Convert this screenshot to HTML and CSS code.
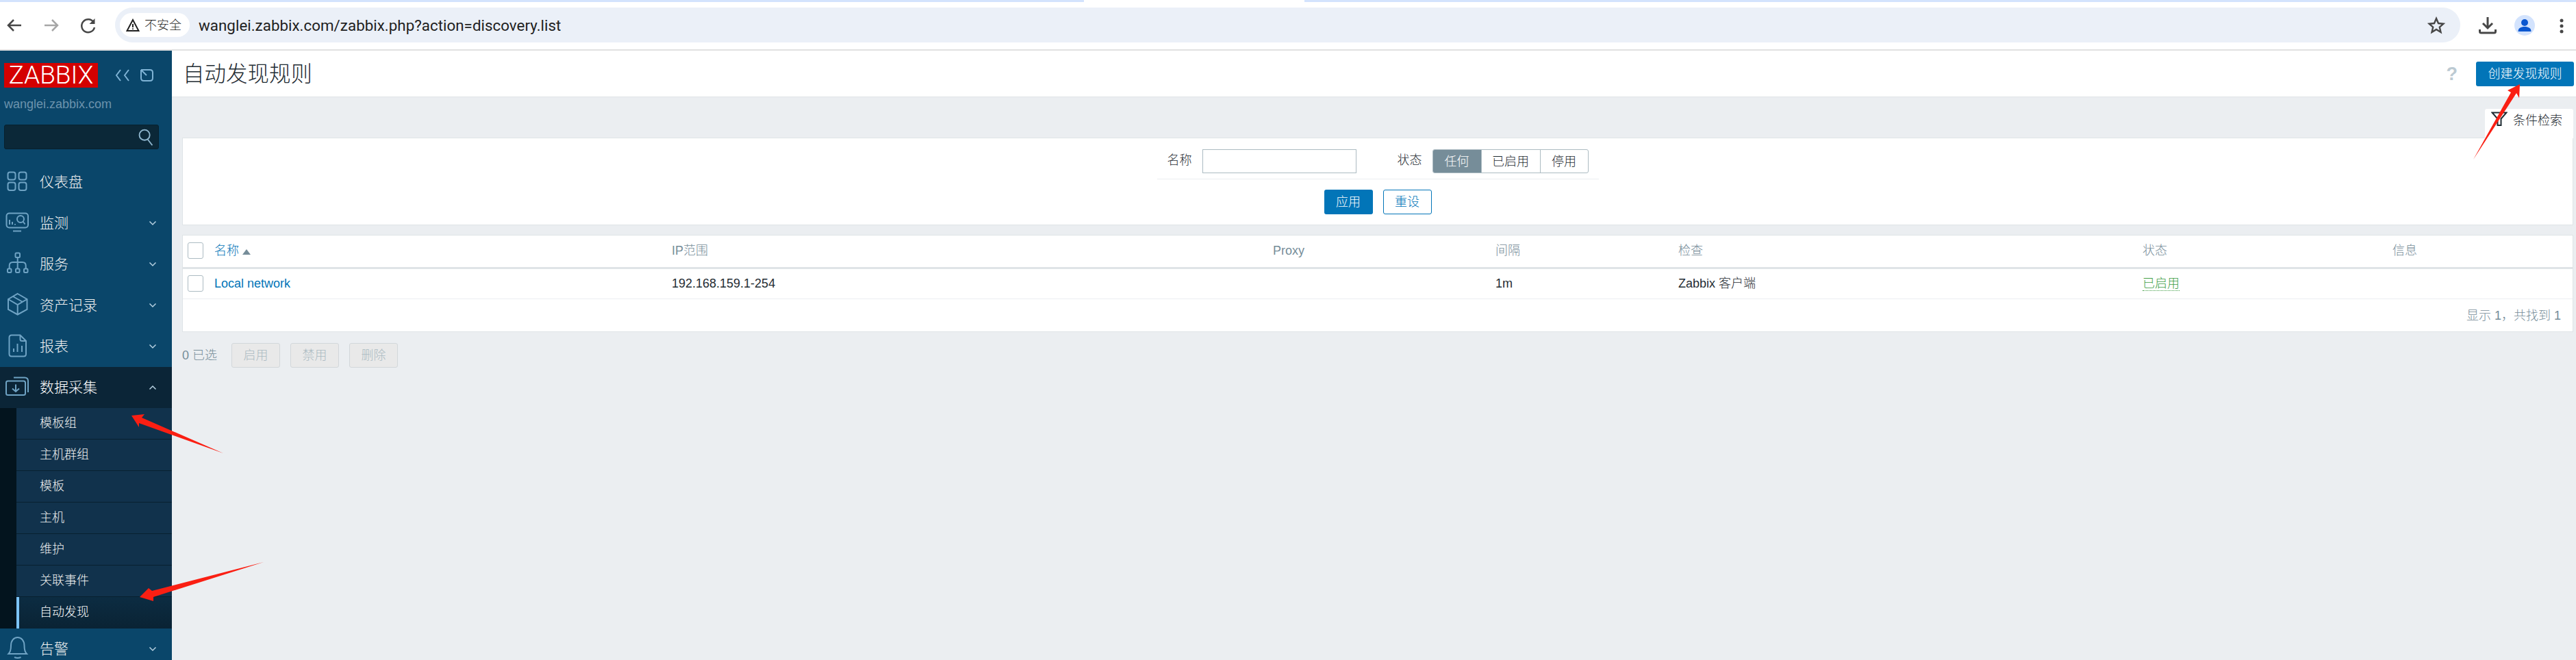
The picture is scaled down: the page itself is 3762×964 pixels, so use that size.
FILE: index.html
```html
<!DOCTYPE html>
<html lang="zh-CN">
<head>
<meta charset="utf-8">
<title>自动发现规则</title>
<link rel="stylesheet" href="styles.css">
</head>
<body>
<div class="tabstrip"><div class="tabstrip-left"></div><div class="tabstrip-tab"></div><div class="tabstrip-right"></div></div>
<header class="toolbar">
  <div class="nav-slot"><svg class="tb-icon" viewBox="0 0 30 30"><path d="M25 15H7M14 7l-8 8 8 8"/></svg></div>
  <div class="nav-slot"><svg class="tb-icon tb-muted" viewBox="0 0 30 30"><path d="M5 15h18M16 7l8 8-8 8"/></svg></div>
  <div class="nav-slot"><svg class="tb-icon" viewBox="0 0 30 30"><path d="M23 11a9.5 9.5 0 1 0 1 7"/><path class="tb-fill" d="M24.5 5v8h-8z"/></svg></div>
  <div class="urlbar">
    <div class="chip">
      <svg class="chip-icon" viewBox="0 0 20 20"><path d="M10 2 1.5 18h17zM10 8v5M10 14.5v1.5"/></svg>
      <span>不安全</span>
    </div>
    <span class="url">wanglei.zabbix.com/zabbix.php?action=discovery.list</span>
    <svg class="star" viewBox="0 0 26 26"><path d="M13 3l3 7 7.5 .7-5.700 5 1.700 7.300L13 19l-6.500 4 1.700-7.300-5.700-5L10 10z"/></svg>
  </div>
  <div class="tb-right">
    <svg class="tb-action tb-download" viewBox="0 0 30 30"><path d="M15 3v16M8 12l7 7 7-7M3.500 21v3a2 2 0 0 0 2 2h19a2 2 0 0 0 2-2v-3"/></svg>
    <svg class="tb-action" viewBox="0 0 30 30"><circle class="av-bg" cx="15" cy="15" r="15"/><circle class="av-fg" cx="15" cy="11" r="5"/><path class="av-fg" d="M5.500 24c0-5 4-7 9.500-7s9.500 2 9.500 7z"/></svg>
    <svg class="tb-action" viewBox="0 0 30 30"><circle class="dot" cx="15" cy="8" r="2.500"/><circle class="dot" cx="15" cy="16" r="2.500"/><circle class="dot" cx="15" cy="24" r="2.500"/></svg>
  </div>
</header>

<div class="app">
  <aside class="sidebar">
    <div class="brand">
      <div class="logo">ZABBIX</div>
      <svg class="brand-tools" viewBox="165 92 60 36"><path d="M176 102l-6 8 6 8M188 102l-6 8 6 8M212 102h7q4 0 4 4v8q0 4-4 4h-9q-4 0-4-4v-6M206 102l8 8M206 102h6M206 102v6"/></svg>
    </div>
    <div class="host">wanglei.zabbix.com</div>
    <div class="search"><svg class="search-icon" viewBox="0 0 26 36"><circle cx="11" cy="15" r="8"/><path d="M16 22l7 9"/></svg></div>
    <nav class="menu">
      <a class="item">
        <svg class="ico" viewBox="0 0 50 60"><rect x="11.500" y="15.500" width="11" height="11" rx="3"/><rect x="27.500" y="15.500" width="11" height="11" rx="3"/><rect x="11.500" y="30.500" width="11" height="11.500" rx="3"/><rect x="27.500" y="30.500" width="11" height="11.500" rx="3"/></svg>
        <span>仪表盘</span>
      </a>
      <a class="item">
        <svg class="ico" viewBox="0 0 50 60"><rect x="9.500" y="15.500" width="31.500" height="21" rx="4"/><path d="M19 41.500h12M14 25v7M18 28v4M22 31v1.500M33.500 27.500l3 4"/><circle cx="30" cy="24" r="5"/></svg>
        <span>监测</span><svg class="chev" viewBox="0 0 12 8"><path d="M1.500 1.500 6 6l4.500-4.500"/></svg>
      </a>
      <a class="item">
        <svg class="ico" viewBox="0 0 50 60"><rect x="22.500" y="13.500" width="6.500" height="6.500" rx="1.500"/><path d="M25.700 20v16M13.700 36v-4q0-5 5-5h14q5 0 5 5v4"/><rect x="11" y="36.500" width="5.500" height="5.500" rx="1.500"/><rect x="23" y="36.500" width="5.500" height="5.500" rx="1.500"/><rect x="35" y="36.500" width="5.500" height="5.500" rx="1.500"/></svg>
        <span>服务</span><svg class="chev" viewBox="0 0 12 8"><path d="M1.500 1.500 6 6l4.500-4.500"/></svg>
      </a>
      <a class="item">
        <svg class="ico" viewBox="0 0 50 60"><path d="M25.700 13 39.500 21v15l-13.800 7.500L12 36V21zM12 21l13.700 8 13.800-8M25.700 29v14.500M19 17l14 8"/></svg>
        <span>资产记录</span><svg class="chev" viewBox="0 0 12 8"><path d="M1.500 1.500 6 6l4.500-4.500"/></svg>
      </a>
      <a class="item">
        <svg class="ico" viewBox="0 0 50 60"><path d="M29.500 13.500H17q-3.500 0-3.500 3.500v24q0 3.500 3.500 3.500h17.500q3.500 0 3.500-3.500V22zv6q0 2.500 2.500 2.500H38M20 33v5M25.500 26v12M32 29v9"/></svg>
        <span>报表</span><svg class="chev" viewBox="0 0 12 8"><path d="M1.500 1.500 6 6l4.500-4.500"/></svg>
      </a>
      <a class="item item-open">
        <svg class="ico" viewBox="0 0 50 60"><rect x="9" y="20.500" width="28" height="20.500" rx="2.500"/><path d="M20 15.500h16q5 0 5 5v16.500M23 25.500V36M18 31.500l5 4.500 5-4.500"/></svg>
        <span>数据采集</span><svg class="chev" viewBox="0 0 12 8"><path d="M1.500 6.500 6 2l4.500 4.500"/></svg>
      </a>
      <div class="submenu">
        <a class="sub">模板组</a>
        <a class="sub">主机群组</a>
        <a class="sub">模板</a>
        <a class="sub">主机</a>
        <a class="sub">维护</a>
        <a class="sub">关联事件</a>
        <a class="sub sub-active">自动发现</a>
      </div>
      <a class="item">
        <svg class="ico" viewBox="0 0 50 60"><path d="M12.500 37c3-3 3.500-6 3.500-12 0-7 4-12 9.700-12s9.800 5 9.800 12c0 6 .5 9 3.500 12zM21 42q4.700 2 9.500 0"/></svg>
        <span>告警</span><svg class="chev" viewBox="0 0 12 8"><path d="M1.500 1.500 6 6l4.500-4.500"/></svg>
      </a>
    </nav>
  </aside>

  <main class="main">
    <div class="page-head">
      <h1 class="title">自动发现规则</h1>
      <span class="help">?</span>
      <button class="btn btn-primary btn-create">创建发现规则</button>
    </div>
    <div class="content">
      <div class="filter-tabs">
        <div class="filter-tab">
          <svg class="funnel" viewBox="0 0 24 22"><path d="M1.500 1.500h21l-8 9v9.500h-5v-9.500z"/></svg>
          <span>条件检索</span>
        </div>
      </div>
      <section class="panel filter">
        <div class="filter-row">
          <label class="flabel">名称</label>
          <input class="finput" type="text">
          <label class="flabel flabel-second">状态</label>
          <div class="seg">
            <span class="seg-item seg-on">任何</span>
            <span class="seg-item seg-wide">已启用</span>
            <span class="seg-item">停用</span>
          </div>
        </div>
        <div class="filter-actions">
          <button class="btn btn-primary">应用</button>
          <button class="btn btn-outline">重设</button>
        </div>
      </section>

      <section class="panel list">
        <table class="grid">
          <colgroup>
            <col class="c-check"><col class="c-name"><col class="c-ip"><col class="c-proxy"><col class="c-int"><col class="c-chk"><col class="c-state"><col>
          </colgroup>
          <thead>
            <tr>
              <th><span class="check"></span></th>
              <th><a class="link">名称</a><span class="sort"></span></th>
              <th>IP范围</th><th>Proxy</th><th>间隔</th><th>检查</th><th>状态</th><th>信息</th>
            </tr>
          </thead>
          <tbody>
            <tr>
              <td><span class="check"></span></td>
              <td><a class="link">Local network</a></td>
              <td>192.168.159.1-254</td><td></td><td>1m</td><td>Zabbix 客户端</td>
              <td><a class="status-ok">已启用</a></td><td></td>
            </tr>
          </tbody>
        </table>
        <div class="paging">显示 1，共找到 1</div>
      </section>

      <div class="actions">
        <span class="selected">0 已选</span>
        <button class="btn btn-disabled">启用</button>
        <button class="btn btn-disabled">禁用</button>
        <button class="btn btn-disabled">删除</button>
      </div>
    </div>
  </main>
</div>

<svg class="annotations" viewBox="0 0 3762 964">
  <polygon points="192,607 211,605 207,610 326,662 203,618 203,624"/>
  <polygon points="204,872 217,859 222,863 385,821 224,872 224,878"/>
  <polygon points="3680,123 3679,143 3675,136 3612,233 3667,135 3662,132"/>
</svg>
</body>
</html>
```

FILE: styles.css
```css
* { box-sizing: border-box; }
html, body { margin: 0; height: 964px; overflow: hidden; }
body {
  position: relative;
  background: #fff;
  font: 300 18px/24px "Liberation Sans", "Noto Sans CJK SC", sans-serif;
  color: #1f2c33;
}
button { font: inherit; }

/* browser chrome */
.tabstrip { display: flex; height: 3px; }
.tabstrip-left { width: 1583px; background: #d3e3fd; }
.tabstrip-tab { width: 322px; background: #fff; }
.tabstrip-right { flex: 1; background: #d3e3fd; }
.toolbar {
  display: flex;
  align-items: center;
  height: 71px;
  padding-bottom: 2px;
  background: #fff;
  border-bottom: 2px solid #e1e1e1;
}
.nav-slot { display: flex; justify-content: center; flex: none; width: 30px; margin: 0 18px 0 6px; }
.tb-icon { width: 30px; height: 30px; fill: none; stroke: #474747; stroke-width: 2.500; }
.tb-muted { stroke: #a6a6a6; }
.tb-fill { fill: #474747; stroke: none; }
.urlbar {
  display: flex;
  flex: 1;
  align-items: center;
  height: 51px;
  margin-left: 6px;
  background: #ebf0f8;
  border-radius: 26px;
}
.chip {
  display: flex;
  align-items: center;
  gap: 7px;
  width: 102px;
  height: 35px;
  margin-left: 7px;
  padding-left: 9px;
  background: #fff;
  border-radius: 18px;
  font-size: 18px;
  color: #1f1f1f;
  white-space: nowrap;
}
.chip-icon { width: 20px; height: 20px; fill: none; stroke: #1f1f1f; stroke-width: 2; flex: none; }
.url {
  margin-left: 13px;
  font: 400 22.4px/30px Roboto, sans-serif;
  color: #1f1f1f;
  white-space: nowrap;
}
.star { width: 26px; height: 26px; margin-left: auto; margin-right: 22px; fill: none; stroke: #474747; stroke-width: 2.400; }
.tb-right { display: flex; align-items: center; gap: 24px; flex: none; width: 169px; padding-left: 25px; }
.tb-action { width: 30px; height: 30px; flex: none; fill: none; }
.tb-download { stroke: #474747; stroke-width: 3; }
.av-bg { fill: #d3e3fd; }
.av-fg { fill: #0b57d0; }
.dot { fill: #474747; }

/* layout */
.app { display: flex; height: 890px; }

/* sidebar */
.sidebar {
  flex: none;
  width: 251px;
  padding-top: 18px;
  background: #0a466a;
  color: #f2f2f2;
  overflow: hidden;
}
.brand { display: flex; align-items: center; padding-left: 6px; height: 36px; }
.logo {
  width: 137px;
  height: 36px;
  background: #d40000;
  color: #fff;
  font: 300 37px/36px Roboto, "Liberation Sans", sans-serif;
  text-align: center;
}
.brand-tools { width: 60px; height: 36px; margin-left: 22px; fill: none; stroke: #7fb3d5; stroke-width: 2; }
.host { margin: 14px 0 0 6px; line-height: 20px; font-size: 18px; color: #6c93ad; white-space: nowrap; }
.search {
  display: flex;
  justify-content: flex-end;
  width: 226px;
  height: 36px;
  margin: 20px 0 0 6px;
  padding-right: 5px;
  background: #0b2838;
  border: 1px solid #06202e;
  border-radius: 3px;
}
.search-icon { width: 26px; height: 34px; fill: none; stroke: #8fb7cf; stroke-width: 2; }
.menu { margin-top: 18px; }
.item {
  display: flex;
  align-items: center;
  height: 60px;
  padding-right: 22px;
  font-size: 21px;
  color: #f2f2f2;
}
.item-open { background: #0b2537; color: #fff; }
.ico { width: 50px; height: 60px; margin-right: 8px; flex: none; fill: none; stroke: #6fa3c4; stroke-width: 2; }
.chev { width: 12px; height: 8px; margin-left: auto; fill: none; stroke: #b6d0e0; stroke-width: 1.500; }
.submenu { padding-left: 24px; background: #03141e; }
.sub {
  display: block;
  height: 46px;
  padding-left: 34px;
  border-bottom: 1px solid #08202f;
  background: #11324c;
  font-size: 18px;
  line-height: 45px;
  color: #f2f2f2;
}
.sub-active {
  padding-left: 30px;
  border-left: 4px solid #7cc4f8;
  border-bottom: 0;
  background: linear-gradient(#0c2c42, #0a2334);
  color: #fff;
}

/* main */
.main { flex: 1; display: flex; flex-direction: column; min-width: 0; background: #ebeef1; }
.page-head {
  display: flex;
  align-items: center;
  height: 68px;
  padding: 0 3px 0 16px;
  background: #fff;
  border-bottom: 1px solid #dfe4e7;
}
.title { margin: 0; font-size: 31.5px; font-weight: 300; line-height: 40px; color: #1f2c33; }
.help { margin-left: auto; margin-right: 27px; font-size: 27px; font-weight: 700; color: #bccad2; }
.btn {
  display: inline-flex;
  align-items: center;
  justify-content: center;
  width: 71px;
  height: 36px;
  padding: 0;
  border: 1px solid transparent;
  border-radius: 3px;
  font-size: 18px;
}
.btn-primary { background: #0275b8; color: #fff; }
.btn-create { width: 143px; }
.btn-outline { background: #fff; border-color: #0275b8; color: #0275b8; }
.btn-disabled { background: #e9e9e9; border-color: #d2d7da; color: #acbbc2; }
.content { flex: 1; padding: 17px 4px 0 15px; }
.filter-tabs { display: flex; justify-content: flex-end; }
.filter-tab {
  display: flex;
  align-items: flex-start;
  gap: 8px;
  width: 129px;
  height: 43px;
  margin-bottom: -1px;
  padding: 4px 0 0 9px;
  background: #fff;
  border-radius: 3px 3px 0 0;
  position: relative;
}
.filter-tab span { line-height: 26px; }
.funnel { width: 24px; height: 22px; flex: none; fill: none; stroke: #1f2c33; stroke-width: 2; }
.panel { background: #fff; border: 1px solid #dfe4e7; }
.filter { padding: 16px 0 15px; }
.filter-row {
  display: flex;
  align-items: flex-start;
  width: 645px;
  height: 44px;
  margin: 0 auto;
  padding-left: 15px;
  border-bottom: 1px solid #ebeef1;
}
.flabel { width: 36px; margin-right: 15px; line-height: 33px; white-space: nowrap; }
.flabel-second { margin-left: 60px; margin-right: 15px; }
.finput { width: 225px; height: 35px; padding: 0; border: 1px solid #acbbc2; background: #fff; border-radius: 0; }
.seg {
  display: flex;
  height: 35px;
  border: 1px solid #acbbc2;
  border-radius: 3px;
  overflow: hidden;
}
.seg-item { display: flex; align-items: center; justify-content: center; width: 70px; border-left: 1px solid #acbbc2; }
.seg-wide { width: 86px; }
.seg-on { border-left: 0; background: #768d99; color: #fff; }
.filter-actions { display: flex; justify-content: center; gap: 15px; margin-top: 15px; }
.list { margin-top: 14px; }
.grid { width: 100%; table-layout: fixed; border-collapse: collapse; }
.c-check { width: 46px; }
.c-name { width: 668px; }
.c-ip { width: 878px; }
.c-proxy { width: 325px; }
.c-int { width: 267px; }
.c-chk { width: 678px; }
.c-state { width: 365px; }
.grid th, .grid td { padding: 0; text-align: left; font-weight: 300; vertical-align: middle; white-space: nowrap; }
.grid th { height: 47px; padding-bottom: 2px; border-bottom: 3px solid #dfe4e7; color: #768d99; }
.grid td { height: 45px; border-bottom: 1px solid #ebeef1; }
.check {
  display: block;
  width: 23px;
  height: 24px;
  margin-left: 7px;
  background: #fff;
  border: 1px solid #acbbc2;
  border-radius: 3px;
}
.link { color: #0275b8; }
.sort {
  display: inline-block;
  margin-left: 5px;
  border-left: 6px solid transparent;
  border-right: 6px solid transparent;
  border-bottom: 8px solid #768d99;
}
.status-ok { color: #429e47; border-bottom: 1px dotted #429e47; }
.paging { height: 47px; padding-right: 17px; text-align: right; line-height: 48px; color: #768d99; }
.actions { display: flex; align-items: center; gap: 15px; margin-top: 16px; }
.selected { width: 57px; color: #768d99; white-space: nowrap; }

/* hand-drawn annotations over the screenshot */
.annotations { position: absolute; left: 0; top: 0; width: 3762px; height: 964px; pointer-events: none; fill: #fa1f13; }
```
